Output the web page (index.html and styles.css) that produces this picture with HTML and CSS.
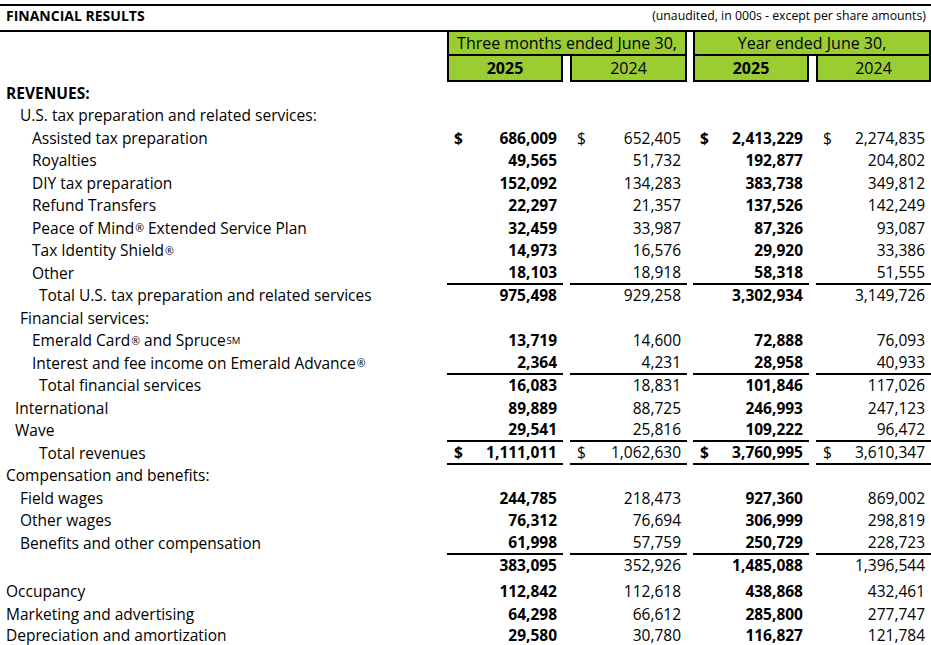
FILE: index.html
```html
<!DOCTYPE html>
<html lang="en">
<head>
<meta charset="utf-8">
<title>Financial Results</title>
<link rel="stylesheet" href="styles.css">
</head>
<body>
<div class="sheet">
  <header class="title-bar">
    <span class="title">FINANCIAL RESULTS</span>
    <span class="note">(unaudited, in 000s - except per share amounts)</span>
  </header>

  <div class="grid groups">
    <div></div>
    <div class="group">Three months ended June 30,</div>
    <div class="group">Year ended June 30,</div>
  </div>
  <div class="grid years">
    <div></div>
    <div class="year b">2025</div>
    <div class="year">2024</div>
    <div class="year b">2025</div>
    <div class="year">2024</div>
  </div>

  <div class="grid row"><div class="lbl l0 b">REVENUES:</div></div>
  <div class="grid row"><div class="lbl l1">U.S. tax preparation and related services:</div></div>
  <div class="grid row"><div class="lbl l2">Assisted tax preparation</div>
    <div class="v b"><span>$</span><span>686,009</span></div>
    <div class="v"><span>$</span><span>652,405</span></div>
    <div class="v b"><span>$</span><span>2,413,229</span></div>
    <div class="v"><span>$</span><span>2,274,835</span></div></div>
  <div class="grid row"><div class="lbl l2">Royalties</div>
    <div class="v b"><span>49,565</span></div><div class="v"><span>51,732</span></div>
    <div class="v b"><span>192,877</span></div><div class="v"><span>204,802</span></div></div>
  <div class="grid row"><div class="lbl l2">DIY tax preparation</div>
    <div class="v b"><span>152,092</span></div><div class="v"><span>134,283</span></div>
    <div class="v b"><span>383,738</span></div><div class="v"><span>349,812</span></div></div>
  <div class="grid row"><div class="lbl l2">Refund Transfers</div>
    <div class="v b"><span>22,297</span></div><div class="v"><span>21,357</span></div>
    <div class="v b"><span>137,526</span></div><div class="v"><span>142,249</span></div></div>
  <div class="grid row"><div class="lbl l2">Peace of Mind<span class="reg">®</span>&nbsp;Extended Service Plan</div>
    <div class="v b"><span>32,459</span></div><div class="v"><span>33,987</span></div>
    <div class="v b"><span>87,326</span></div><div class="v"><span>93,087</span></div></div>
  <div class="grid row"><div class="lbl l2">Tax Identity Shield<span class="reg">®</span></div>
    <div class="v b"><span>14,973</span></div><div class="v"><span>16,576</span></div>
    <div class="v b"><span>29,920</span></div><div class="v"><span>33,386</span></div></div>
  <div class="grid row ul"><div class="lbl l2">Other</div>
    <div class="v b"><span>18,103</span></div><div class="v"><span>18,918</span></div>
    <div class="v b"><span>58,318</span></div><div class="v"><span>51,555</span></div></div>
  <div class="grid row"><div class="lbl l3">Total U.S. tax preparation and related services</div>
    <div class="v b"><span>975,498</span></div><div class="v"><span>929,258</span></div>
    <div class="v b"><span>3,302,934</span></div><div class="v"><span>3,149,726</span></div></div>
  <div class="grid row"><div class="lbl l1">Financial services:</div></div>
  <div class="grid row"><div class="lbl l2">Emerald Card<span class="reg">®</span>&nbsp;and Spruce<sup class="sm">SM</sup></div>
    <div class="v b"><span>13,719</span></div><div class="v"><span>14,600</span></div>
    <div class="v b"><span>72,888</span></div><div class="v"><span>76,093</span></div></div>
  <div class="grid row ul"><div class="lbl l2">Interest and fee income on Emerald Advance<span class="reg">®</span></div>
    <div class="v b"><span>2,364</span></div><div class="v"><span>4,231</span></div>
    <div class="v b"><span>28,958</span></div><div class="v"><span>40,933</span></div></div>
  <div class="grid row"><div class="lbl l3">Total financial services</div>
    <div class="v b"><span>16,083</span></div><div class="v"><span>18,831</span></div>
    <div class="v b"><span>101,846</span></div><div class="v"><span>117,026</span></div></div>
  <div class="grid row"><div class="lbl l1s">International</div>
    <div class="v b"><span>89,889</span></div><div class="v"><span>88,725</span></div>
    <div class="v b"><span>246,993</span></div><div class="v"><span>247,123</span></div></div>
  <div class="grid row ul"><div class="lbl l1s">Wave</div>
    <div class="v b"><span>29,541</span></div><div class="v"><span>25,816</span></div>
    <div class="v b"><span>109,222</span></div><div class="v"><span>96,472</span></div></div>
  <div class="grid row ul"><div class="lbl l3">Total revenues</div>
    <div class="v b"><span>$</span><span>1,111,011</span></div>
    <div class="v"><span>$</span><span>1,062,630</span></div>
    <div class="v b"><span>$</span><span>3,760,995</span></div>
    <div class="v"><span>$</span><span>3,610,347</span></div></div>
  <div class="grid row"><div class="lbl l0">Compensation and benefits:</div></div>
  <div class="grid row"><div class="lbl l1">Field wages</div>
    <div class="v b"><span>244,785</span></div><div class="v"><span>218,473</span></div>
    <div class="v b"><span>927,360</span></div><div class="v"><span>869,002</span></div></div>
  <div class="grid row"><div class="lbl l1">Other wages</div>
    <div class="v b"><span>76,312</span></div><div class="v"><span>76,694</span></div>
    <div class="v b"><span>306,999</span></div><div class="v"><span>298,819</span></div></div>
  <div class="grid row ul"><div class="lbl l1">Benefits and other compensation</div>
    <div class="v b"><span>61,998</span></div><div class="v"><span>57,759</span></div>
    <div class="v b"><span>250,729</span></div><div class="v"><span>228,723</span></div></div>
  <div class="grid row"><div class="lbl l1"></div>
    <div class="v b"><span>383,095</span></div><div class="v"><span>352,926</span></div>
    <div class="v b"><span>1,485,088</span></div><div class="v"><span>1,396,544</span></div></div>
  <div class="grid row gap-before"><div class="lbl l0">Occupancy</div>
    <div class="v b"><span>112,842</span></div><div class="v"><span>112,618</span></div>
    <div class="v b"><span>438,868</span></div><div class="v"><span>432,461</span></div></div>
  <div class="grid row"><div class="lbl l0">Marketing and advertising</div>
    <div class="v b"><span>64,298</span></div><div class="v"><span>66,612</span></div>
    <div class="v b"><span>285,800</span></div><div class="v"><span>277,747</span></div></div>
  <div class="grid row last"><div class="lbl l0">Depreciation and amortization</div>
    <div class="v b"><span>29,580</span></div><div class="v"><span>30,780</span></div>
    <div class="v b"><span>116,827</span></div><div class="v"><span>121,784</span></div></div>
</div>
</body>
</html>
```

FILE: styles.css
```css
* { box-sizing: border-box; }

html, body {
  margin: 0;
  padding: 0;
  background: #ffffff;
}

body {
  font-family: "Open Sans", "Liberation Sans", sans-serif;
  font-size: 15.5px;
  color: #000;
  overflow: hidden;
}

.sheet {
  width: 931px;
  padding-top: 4px;
}

.title-bar {
  display: flex;
  justify-content: space-between;
  align-items: center;
  height: 28px;
  border-top: 2px solid #000;
  border-bottom: 2px solid #000;
  padding: 0 5px 6px 6px;
}

.title {
  font-weight: 700;
  font-size: 14px;
}

.note {
  font-size: 12.3px;
}

.grid {
  display: grid;
}

.groups, .years {
  grid-template-columns: 447px 116px 7px 117px 6px 116px 7px 115px;
}

.group {
  grid-column: span 3;
  background: #9acd32;
  border: 2px solid #000;
  border-top: none;
  height: 24px;
  display: flex;
  align-items: center;
  justify-content: center;
  padding-bottom: 1px;
  font-size: 16px;
}

.groups .group:nth-child(3) {
  grid-column: 6 / span 3;
}

.years .year {
  background: #9acd32;
  border: 2px solid #000;
  border-top: none;
  height: 26px;
  display: flex;
  align-items: center;
  justify-content: center;
  font-size: 16px;
}

.years .year:nth-child(2) { grid-column: 2; }
.years .year:nth-child(3) { grid-column: 4; }
.years .year:nth-child(4) { grid-column: 6; }
.years .year:nth-child(5) { grid-column: 8; }

.row {
  grid-template-columns: 447px 116px 124px 122px 122px;
  height: 22.5px;
  align-items: stretch;
  line-height: 1.1;
}

.row.gap-before {
  margin-top: 3.5px;
}

.row.last {
  height: 20px;
}

.lbl {
  display: flex;
  align-items: center;
  white-space: nowrap;
}

.l0 { padding-left: 6px; }
.l1 { padding-left: 20px; }
.l1s { padding-left: 15px; }
.l2 { padding-left: 32px; }
.l3 { padding-left: 39px; }

.v {
  display: flex;
  align-items: center;
  justify-content: flex-end;
  padding: 0 6px 0 7px;
  font-variant-numeric: tabular-nums;
}

.row .v:nth-child(3) { margin-left: 7px; }
.row .v:nth-child(4) { margin-left: 6px; }
.row .v:nth-child(5) { margin-left: 7px; }

.v span:first-child:not(:last-child) {
  margin-right: auto;
}

.ul .v {
  border-bottom: 2px solid #000;
}

.b { font-weight: 700; }

.reg {
  font-size: 0.68em;
  vertical-align: 0.45em;
  line-height: 0;
  margin-left: 1px;
}

.sm {
  font-size: 0.62em;
  line-height: 0;
  margin-left: 1px;
}
```
